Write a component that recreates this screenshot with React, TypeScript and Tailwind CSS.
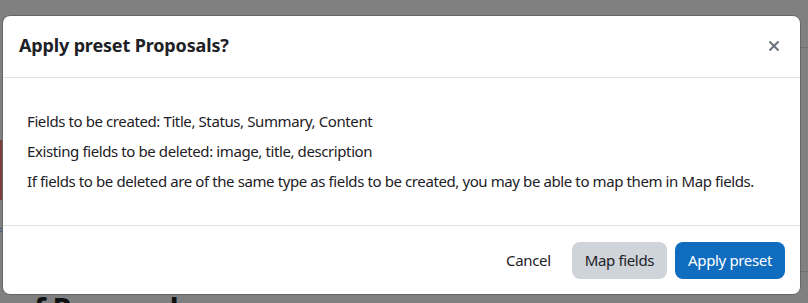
import React from "react";

export default function App() {
  const font = { fontFamily: '"Noto Sans", "Open Sans", sans-serif' };
  return (
    <div className="relative w-[808px] h-[303px] overflow-hidden bg-[#808080]" style={font}>
      {/* underlying page bits behind the backdrop */}
      <div className="absolute left-0 top-[140px] w-[2px] h-[60px] bg-[#7a3f3a]" />
      <div className="absolute left-0 top-[228px] w-[2px] h-[4px] border-y border-[#3b5a80]" />
      <div className="absolute left-[800px] top-[47px] w-[8px] h-[225px] border-y border-[#707070]" />
      <div className="absolute left-[34px] top-[294px] flex items-start">
        <span className="text-[30px] font-bold leading-none text-[#0e1012] tracking-[-0.5px]">f Proposal</span>
      </div>

      <div className="relative ml-[2px] mt-[15px] w-[799px] h-[280px] bg-white border border-[#666] rounded-[8px] flex flex-col">
        <div className="h-[62px] flex items-center justify-between pl-[16px] pr-[20px] border-b border-[#dee2e6]">
          <h5 className="text-[18px] font-bold text-[#1d2125] leading-none mt-[-4px] tracking-[-0.15px]">Apply preset Proposals?</h5>
          <svg width="12" height="12" viewBox="0 0 12 12" className="mt-[-2px]">
            <path d="M1.5 1.5 L10.5 10.5 M10.5 1.5 L1.5 10.5" stroke="#6a737b" strokeWidth="2" />
          </svg>
        </div>
        <div className="h-[148px] pl-[24px] pt-[32px] text-[15px] text-[#1d2125] tracking-[-0.4px] border-b border-[#dee2e6]">
          <p className="leading-[22px] mb-[8px]">Fields to be created: Title, Status, Summary, Content</p>
          <p className="leading-[22px] mb-[8px]">Existing fields to be deleted: image, title, description</p>
          <p className="leading-[22px]">If fields to be deleted are of the same type as fields to be created, you may be able to map them in Map fields.</p>
        </div>
        <div className="flex-1 flex items-center justify-end pr-[15px] gap-[8px] text-[15px] tracking-[-0.35px]">
          <button className="h-[37px] px-[12px] text-[#1d2125] bg-white rounded-[8px] mr-[1px]">Cancel</button>
          <button className="h-[37px] px-[13px] text-[#1d2125] bg-[#ced4da] rounded-[8px]">Map fields</button>
          <button className="h-[37px] px-[13px] text-white bg-[#0f6cbf] rounded-[8px]">Apply preset</button>
        </div>
      </div>
    </div>
  );
}
